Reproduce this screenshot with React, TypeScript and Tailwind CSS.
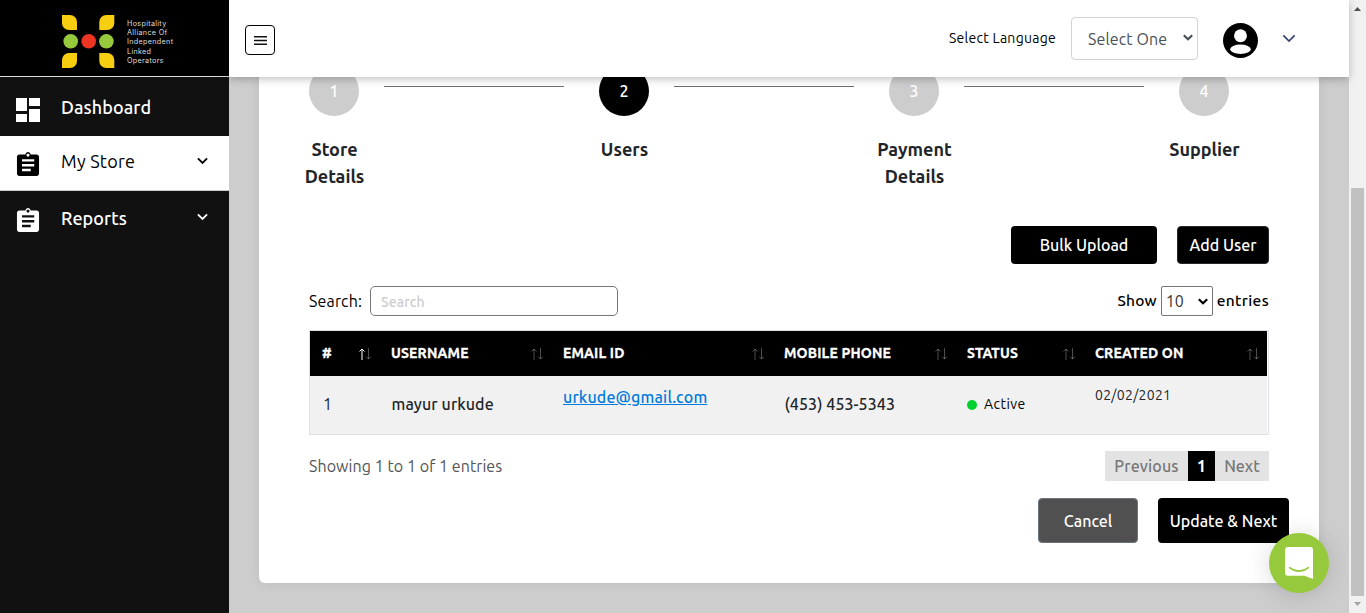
import type { ReactNode } from "react";

type Column = { label: string; width: string; sorted?: boolean };

const columns: Column[] = [
  { label: "#", width: "w-[69px]", sorted: true },
  { label: "USERNAME", width: "w-[172px]" },
  { label: "EMAIL ID", width: "w-[221px]" },
  { label: "MOBILE PHONE", width: "w-[183px]" },
  { label: "STATUS", width: "w-[128px]" },
  { label: "CREATED ON", width: "w-[184px]" },
];

const steps = [
  { n: 1, lines: ["Store", "Details"], active: false },
  { n: 2, lines: ["Users"], active: true },
  { n: 3, lines: ["Payment", "Details"], active: false },
  { n: 4, lines: ["Supplier"], active: false },
];

function Chevron({ className, thick = 2 }: { className: string; thick?: number }) {
  return (
    <svg viewBox="0 0 12 8" className={className} fill="none" stroke="currentColor" strokeWidth={thick}>
      <path d="M1 1.2 6 6.2 11 1.2" />
    </svg>
  );
}

function Logo() {
  return (
    <svg viewBox="0 0 53 53" className="h-[53px] w-[53px] shrink-0">
      <g fill="#f8cf10">
        <path d="M0 0h8a7 7 0 0 1 7 7v8H7a7 7 0 0 1-7-7z" />
        <path d="M52.300 0h-8a7 7 0 0 0-7 7v8h8a7 7 0 0 0 7-7z" />
        <path d="M0 53h8a7 7 0 0 0 7-7v-8H7a7 7 0 0 0-7 7z" />
        <path d="M52.300 53h-8a7 7 0 0 1-7-7v-8h8a7 7 0 0 1 7 7z" />
      </g>
      <circle cx="8.700" cy="26.300" r="7.300" fill="#97c93d" />
      <circle cx="26.700" cy="26.300" r="7.300" fill="#ee3524" />
      <circle cx="44.400" cy="26.300" r="7.300" fill="#97c93d" />
    </svg>
  );
}

function DashboardIcon() {
  return (
    <svg viewBox="0 0 24 24" className="h-6 w-6" fill="currentColor">
      <path d="M0 0h11v13H0zM13 0h11v8H13zM0 16h11v8H0zM13 11h11v13H13z" />
    </svg>
  );
}

function ClipboardIcon() {
  return (
    <svg viewBox="2 1 20 20" className="h-6 w-6" fill="currentColor">
      <path d="M19.200 3h-5C13.900 1.800 13.100 1 12 1s-1.900.8-2.200 2h-5C3.700 3 2.800 3.900 2.800 5v14c0 1.100.9 2 2 2h14.400c1.100 0 2-.9 2-2V5c0-1.100-.9-2-2-2zM12 2.300a1.300 1.300 0 1 1 0 2.600 1.300 1.300 0 0 1 0-2.600zM14.300 17H7v-2h7.300v2zm2.900-4H7v-2h10.200v2zm0-4H7V7h10.200v2z" />
    </svg>
  );
}

function NavRow({ icon, label, className, labelClass, open }: { icon: ReactNode; label: string; className: string; labelClass: string; open?: boolean }) {
  return (
    <div className={`flex items-center pl-4 pr-[21px] ${className}`}>
      {icon}
      <span className={`ml-[21px] flex-1 text-[18px] leading-6 ${labelClass}`}>{label}</span>
      {open && <Chevron className="mb-[5px] h-2 w-[11px]" />}
    </div>
  );
}

function SortArrows({ sorted }: { sorted?: boolean }) {
  return (
    <svg viewBox="0 0 13 14" className="h-[14px] w-[13px]" fill="none" stroke="#fff">
      <path d="M4 13V2M1.500 4.500 4 2 6.500 4.500" opacity={sorted ? 1 : 0.3} />
      <path d="M10.500 1v11M8 9.500 10.500 12l2.500-2.500" opacity="0.3" />
    </svg>
  );
}

export default function App() {
  return (
    <div className="relative flex h-[613px] w-[1366px] overflow-hidden bg-[#cdcdcd] font-['Ubuntu','Noto_Sans',sans-serif] whitespace-nowrap text-black">
      <aside className="flex w-[229px] shrink-0 flex-col bg-[#111] text-white">
        <div className="flex h-[77px] items-start border-b border-[#ddd] bg-black pt-[15px] pl-[62px]">
          <Logo />
          <div className="ml-3 pt-[4px] font-['Inter',sans-serif] text-[7.200px] leading-[9.200px] tracking-[0.320px] text-[#ddd]">
            <div>Hospitality</div>
            <div>Alliance Of</div>
            <div>Independent</div>
            <div>Linked</div>
            <div>Operators</div>
          </div>
        </div>
        <NavRow icon={<DashboardIcon />} label="Dashboard" className="h-[59px] pt-1.5" labelClass="mb-[6px] font-medium tracking-[0.100px]" />
        <NavRow icon={<ClipboardIcon />} label="My Store" className="h-[55px] border-b border-[#ccc] bg-white pt-px text-black" labelClass="mb-[5px] tracking-[0.250px]" open />
        <NavRow icon={<ClipboardIcon />} label="Reports" className="h-[57px]" labelClass="mb-[4px] font-medium tracking-[0.100px]" open />
      </aside>

      <div className="flex w-[1120px] shrink-0 flex-col">
        <header className="z-10 flex h-[77px] shrink-0 items-start bg-white shadow-[0_2px_8px_rgba(0,0,0,0.25)]">
          <button className="mt-[25px] ml-4 flex h-[30px] w-[30px] items-center justify-center rounded border border-black">
            <svg viewBox="0 0 13 9" className="h-[9px] w-[13px]" stroke="#111" strokeWidth="1.500">
              <path d="M0 .7h13M0 4.500h13M0 8.300h13" />
            </svg>
          </button>
          <span className="mt-[28px] ml-auto text-[14px] leading-5 tracking-[0.270px]">Select Language</span>
          <div className="mt-[17px] ml-[15px] flex h-[43px] w-[127px] items-center justify-between rounded border border-[#ced4da] pr-1 pl-4 text-[16px] text-[#495057]">
            <span className="tracking-[0.120px]">Select One</span>
            <Chevron className="mb-0.5 h-[7px] w-[10px]" thick={2.6} />
          </div>
          <svg viewBox="2 2 20 20" className="mt-[23px] ml-[25px] h-[35px] w-[35px]">
            <path fill="#000" d="M12 2C6.480 2 2 6.480 2 12s4.480 10 10 10 10-4.480 10-10S17.520 2 12 2z" />
            <circle cx="12" cy="9.300" r="3.700" fill="#fff" />
            <ellipse cx="12" cy="17" rx="5.900" ry="2.700" fill="#fff" />
          </svg>
          <Chevron className="mt-[34px] mr-[53px] ml-6 h-[9px] w-[14px] text-[#32446e]" thick={1.5} />
        </header>

        <main className="mx-[30px] h-[506px] overflow-hidden rounded-b-md bg-white shadow-[0_0_12px_rgba(0,0,0,0.08)]">
          <div className="-mt-[11px] flex h-[148px] pl-[25px]">
            {steps.map((s, i) => (
              <div key={s.n} className="flex">
                <div className="flex w-[100px] flex-col items-center">
                  <div className={`flex h-[50px] w-[50px] items-center justify-center rounded-full text-[16px] font-medium text-white ${s.active ? "bg-black" : "bg-[#cdcdcd]"}`}>{s.n}</div>
                  <div className="mt-5 pl-px text-center text-[18px] leading-[27px] font-semibold text-[#212529]">
                    {s.lines.map((l) => (
                      <div key={l}>{l}</div>
                    ))}
                  </div>
                </div>
                {i < 3 && <div className="mt-5 mr-[10px] h-px w-[180px] bg-[#6f6f6f]" />}
              </div>
            ))}
          </div>

          <div className="px-[50px]">
            <div className="mt-3 flex h-[38px] justify-end gap-5 text-[16px] font-medium text-white">
              <button className="w-[146px] rounded bg-black">Bulk Upload</button>
              <button className="w-[92px] rounded border border-[#23272b] bg-black">Add User</button>
            </div>

            <div className="mt-[22px] flex h-[30px] items-center justify-between text-[16px]">
              <div className="flex items-center">
                <span className="w-[61px] tracking-[0.150px]">Search:</span>
                <div className="flex h-[30px] w-[248px] items-center rounded-[5px] border border-[#777] pt-0.5 pl-[10px] text-[14px] font-medium tracking-[0.100px] text-[#ccc]">Search</div>
              </div>
              <div className="flex items-center">
                <span className="text-[15.500px] font-medium tracking-[0.200px]">Show</span>
                <div className="mx-1 flex h-[30px] w-[52px] items-center justify-between rounded-xs border border-[#767676] pr-1 pl-1 text-[#333]">
                  <span>10</span>
                  <Chevron className="h-[7px] w-[10px] text-black" thick={2.6} />
                </div>
                <span className="text-[15.500px] font-medium tracking-[0.350px]">entries</span>
              </div>
            </div>

            <div className="mt-[14px] h-[105px] w-[960px] border border-[#dee2e6]">
              <div className="flex h-[45px] w-[957px] bg-black text-[14px] font-bold text-white">
                {columns.map((c) => (
                  <div key={c.label} className={`flex items-center justify-between pr-2 pl-3 ${c.width}`}>
                    <span className="tracking-[0.160px] [-webkit-text-stroke:0.3px_#fff]">{c.label}</span>
                    <SortArrows sorted={c.sorted} />
                  </div>
                ))}
              </div>
              <div className="flex h-[58px] w-[957px] bg-[#f1f1f1] text-[16px] leading-6 text-[#212529]">
                <div className="w-[69px] pt-4 pl-[13px]">1</div>
                <div className="w-[172px] pt-4 pl-[12.500px] font-medium tracking-[0.100px]">mayur urkude</div>
                <div className="w-[221px] pt-[9px] pl-3 font-medium tracking-[0.170px] text-[#007bdc] underline">urkude@gmail.com</div>
                <div className="w-[183px] pt-4 pl-[12.500px] font-medium tracking-[0.080px]">(453) 453-5343</div>
                <div className="flex w-[128px] items-start pt-4 pl-3 text-[14px] tracking-[0.450px] text-black">
                  <span className="mt-[8px] mr-[7px] h-[10px] w-[10px] rounded-full bg-[#00d02c]" />
                  Active
                </div>
                <div className="w-[184px] pt-[7px] pl-3 text-[14px] tracking-[0.280px]">02/02/2021</div>
              </div>
            </div>

            <div className="mt-4 flex h-[30px] items-center justify-between text-[16px]">
              <span className="tracking-[0.060px] text-[#555]">Showing 1 to 1 of 1 entries</span>
              <div className="flex h-[30px] items-center bg-[#e3e3e3] text-center leading-[30px] font-medium text-[#777]">
                <span className="w-[83px] tracking-[0.150px]">Previous</span>
                <span className="w-[27px] bg-black font-bold text-white">1</span>
                <span className="w-[54px]">Next</span>
              </div>
            </div>

            <div className="-mr-5 mt-[17px] flex h-[45px] justify-end gap-5 text-[16px] font-medium text-white">
              <button className="w-[100px] rounded border border-[#6c757d] bg-[#505050]">Cancel</button>
              <button className="w-[131px] rounded bg-black">Update &amp; Next</button>
            </div>
          </div>
        </main>
      </div>

      <div className="flex w-[17px] shrink-0 flex-col items-center bg-[#f1f1f1]">
        <svg viewBox="0 0 7 4" className="mt-[7px] h-1 w-[7px]" fill="#505050"><path d="M0 4 3.500 0 7 4z" /></svg>
        <div className="mt-[177px] h-[408px] w-[13px] bg-[#c1c1c1]" />
        <svg viewBox="0 0 7 4" className="mt-[6px] h-1 w-[7px]" fill="#a3a3a3"><path d="M0 0 3.500 4 7 0z" /></svg>
      </div>

      <div className="absolute top-[533px] left-[1269px] z-20 flex h-[60px] w-[60px] items-center justify-center rounded-full bg-[#97c93d] shadow-[0_2px_24px_rgba(0,0,0,0.15)]">
        <svg viewBox="0 0 28 32" className="h-8 w-7">
          <path fill="#fff" d="M3 0h22a3 3 0 0 1 3 3v29s-4.500-1.600-8.500-3.200H3a3 3 0 0 1-3-3V3a3 3 0 0 1 3-3z" />
          <path d="M4.600 20.700c5.600 4.600 13.200 4.600 18.800 0" fill="none" stroke="#97c93d" strokeWidth="1.700" strokeLinecap="round" />
        </svg>
      </div>
    </div>
  );
}
